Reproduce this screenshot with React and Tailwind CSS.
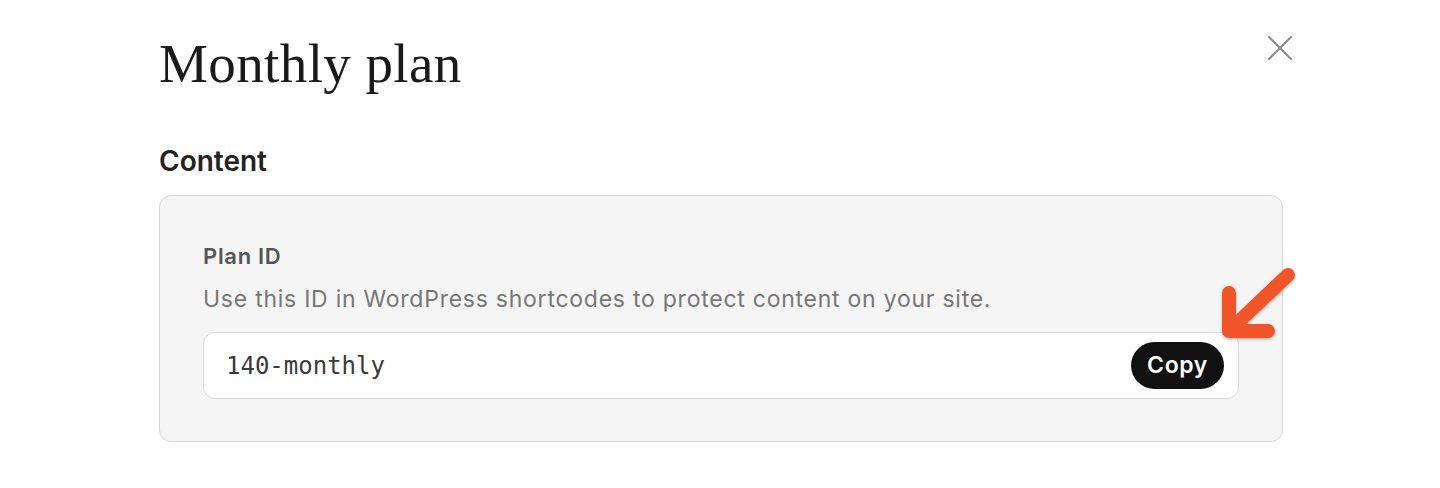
import React from "react";

export default function App() {
  return (
    <div className="relative w-[1440px] h-[488px] bg-white overflow-hidden" style={{ fontFamily: "Inter, 'Noto Sans', sans-serif" }}>
      <div className="ml-[159px] w-[1124px] pt-[32px]">
        <div className="flex items-start justify-between">
          <h1 className="text-[55px] leading-[64px] text-[#1a1a1a] tracking-[0.4px]" style={{ fontFamily: "'Liberation Serif', 'DejaVu Serif', serif" }}>
            Monthly plan
          </h1>
          <button className="mt-[4px] mr-[-9px] w-[24px] h-[24px] text-[#8a8a8a]" aria-label="Close">
            <svg width="24" height="24" viewBox="0 0 24 24" fill="none" stroke="currentColor" strokeWidth="2" strokeLinecap="round">
              <path d="M1 1 L23 23 M23 1 L1 23" />
            </svg>
          </button>
        </div>
        <h2 className="mt-[48px] text-[28px] leading-[34px] font-semibold text-[#222]">Content</h2>
        <div className="mt-[17px] rounded-[12px] border border-[#d8d8d8] bg-[#f5f5f5] px-[43px] pt-[46px] pb-[42px]">
          <div className="text-[22px] leading-[28px] font-semibold tracking-[0.7px] text-[#555]">Plan ID</div>
          <div className="mt-[14px] text-[23px] leading-[30px] tracking-[0.75px] text-[#777]">Use this ID in WordPress shortcodes to protect content on your site.</div>
          <div className="mt-[18px] flex h-[67px] items-center justify-between rounded-[12px] border border-[#d9d9d9] bg-white pl-[22px] pr-[14px]">
            <span className="text-[24px] text-[#3a3a3a]" style={{ fontFamily: "'DejaVu Sans Mono', 'Liberation Mono', monospace" }}>140-monthly</span>
            <button className="h-[47px] w-[93px] rounded-full bg-[#111] text-[23px] font-semibold tracking-[0.6px] text-white">Copy</button>
          </div>
        </div>
      </div>
      <svg className="absolute left-[1210px] top-[260px]" width="100" height="100" viewBox="1210 260 100 100" fill="none">
        <defs>
          <filter id="sh" x="-20%" y="-20%" width="140%" height="140%">
            <feDropShadow dx="0" dy="1.5" stdDeviation="1.5" floodColor="#000" floodOpacity="0.25" />
          </filter>
        </defs>
        <g filter="url(#sh)" stroke="#f1552a" strokeWidth="14" strokeLinecap="round" strokeLinejoin="round">
          <path d="M1229 293 L1229 331 L1268 331" />
          <path d="M1231 329 L1288 275" />
        </g>
      </svg>
    </div>
  );
}
